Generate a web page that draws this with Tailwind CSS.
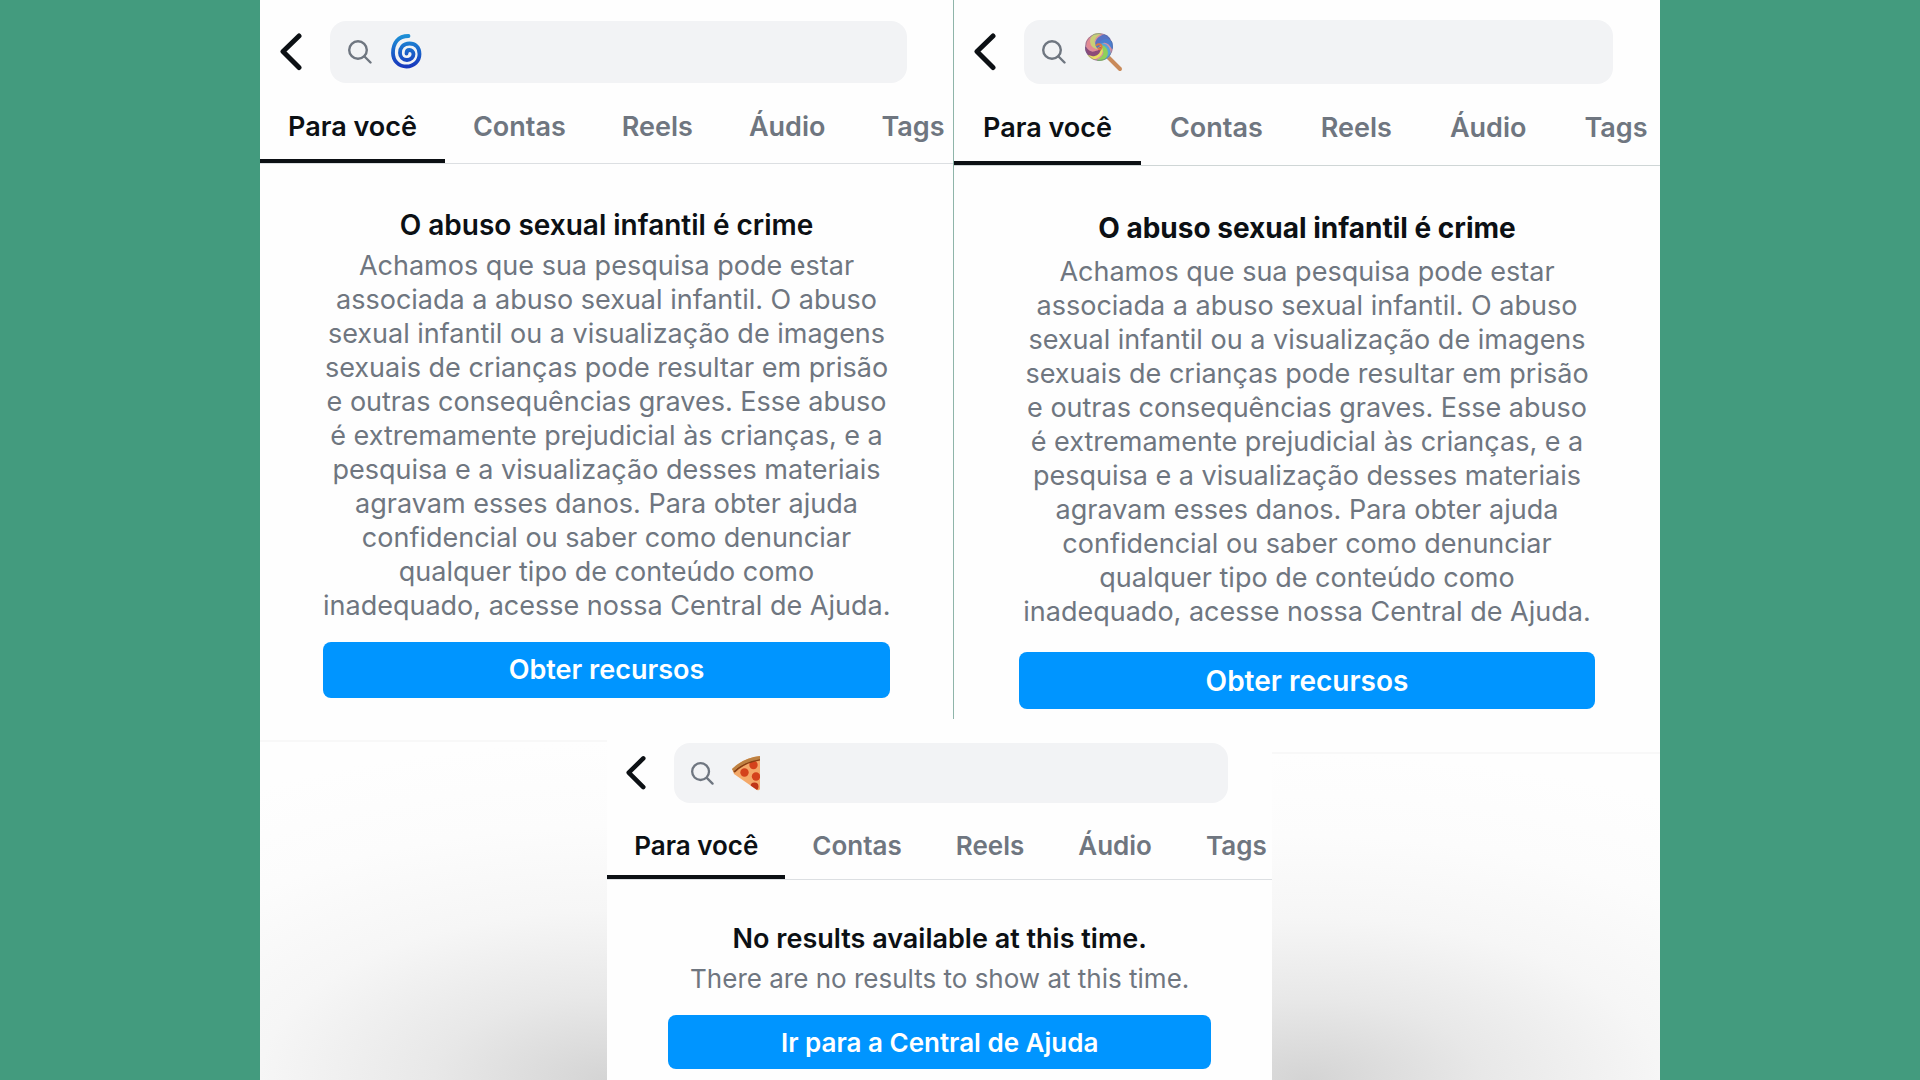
<!DOCTYPE html>
<html lang="pt-BR">
<head>
    <meta charset="UTF-8">
    <meta name="viewport" content="width=device-width, initial-scale=1.0">
    <title>Pesquisa</title>
    <script src="https://cdn.jsdelivr.net/npm/@tailwindcss/browser@4"></script>
</head>
<body class="min-h-screen bg-[#439b7e] font-['Inter',sans-serif] text-[#0c1014]">
    <div class="grid min-h-screen grid-cols-[13fr_70fr_13fr]">
        <main class="relative col-start-2 grid grid-cols-[693fr_707fr] overflow-hidden bg-[#fefefe]">

            <!-- Left panel -->
            <section class="flex min-w-0 flex-col">
                <div class="flex items-center gap-7 pt-[21px] pr-[46px] pl-5">
                    <button aria-label="Voltar" class="shrink-0">
                        <svg class="h-[38px] w-[22px]" viewBox="0 0 22 38" fill="none" stroke="currentColor" stroke-width="5" stroke-linecap="round" stroke-linejoin="round"><path d="M19 3L3 18.500L19 34.500"/></svg>
                    </button>
                    <label class="flex h-[62px] min-w-0 flex-1 items-center rounded-2xl bg-[#f2f3f5] pl-[18px]">
                        <svg class="size-6 shrink-0 text-[#6f7680]" viewBox="0 0 24 24" fill="none" stroke="currentColor" stroke-width="2.4" stroke-linecap="round"><circle cx="10" cy="10" r="8.800"/><path d="M16.500 16.500L22.500 22.500"/></svg>
                        <!-- Swirl -->
                        <svg class="ml-[18px] h-9 w-9 shrink-0" viewBox="0 0 36 36" fill="none">
                            <defs><linearGradient id="swirl" x1="0" y1="0" x2="0" y2="1"><stop offset="0" stop-color="#1d8fd6"/><stop offset="1" stop-color="#1838bd"/></linearGradient></defs>
                            <path d="M18.500 2C8 2 3 9 3 19C3 27 9 32.500 16.500 32.500C24 32.500 29.500 27 29.500 20C29.500 13 25 9.500 19.500 9.500C13 9.500 10 14 10 19C10 23 13 26 17 26C21 26 23.500 23 23.500 20C23.500 17.500 21.500 16 19.500 16C17.500 16 16.500 17.500 16.500 19.500" stroke="url(#swirl)" stroke-width="3.800" stroke-linecap="round"/>
                        </svg>
                        <input type="text" aria-label="Pesquisar" class="h-full min-w-0 flex-1 bg-transparent outline-none">
                    </label>
                </div>
                <nav class="mt-2 flex h-[73px] overflow-hidden border-b border-[#dcdfe2] text-[27px] font-semibold whitespace-nowrap text-[#6f7680]">
                    <a href="#" class="flex items-center border-b-4 border-[#0c1014] px-7 pt-1 text-[#0c1014]">Para você</a>
                    <a href="#" class="flex items-center px-7">Contas</a>
                    <a href="#" class="flex items-center px-7">Reels</a>
                    <a href="#" class="flex items-center px-7">Áudio</a>
                    <a href="#" class="flex items-center px-7">Tags</a>
                </nav>
                <div class="px-[63px] pt-11 text-center">
                    <h2 class="text-[28px] leading-[34px] font-semibold">O abuso sexual infantil é crime</h2>
                    <p class="mt-[7px] text-[27px] leading-[34px] whitespace-nowrap text-[#6f7680]">
                        Achamos que sua pesquisa pode estar<br>
                        associada a abuso sexual infantil. O abuso<br>
                        sexual infantil ou a visualização de imagens<br>
                        sexuais de crianças pode resultar em prisão<br>
                        e outras consequências graves. Esse abuso<br>
                        é extremamente prejudicial às crianças, e a<br>
                        pesquisa e a visualização desses materiais<br>
                        agravam esses danos. Para obter ajuda<br>
                        confidencial ou saber como denunciar<br>
                        qualquer tipo de conteúdo como<br>
                        inadequado, acesse nossa Central de Ajuda.
                    </p>
                    <button class="mt-[19px] h-14 w-full rounded-lg bg-[#0095ff] text-[27px] font-semibold text-white">Obter recursos</button>
                </div>
                <div class="mt-[42px] flex-1 border-t-2 border-[#f8f8f8] bg-[radial-gradient(ellipse_100%_100%_at_50%_100%,#d4d4d4_0%,#e8e8e8_25%,#f6f6f6_50%,#fcfcfc_75%,#fefefe_100%)]"></div>
            </section>

            <!-- Right panel -->
            <section class="flex min-w-0 flex-col border-l border-[#8fb5aa]">
                <div class="flex items-center gap-7 pt-5 pr-[47px] pl-5">
                    <button aria-label="Voltar" class="shrink-0">
                        <svg class="h-[38px] w-[22px]" viewBox="0 0 22 38" fill="none" stroke="currentColor" stroke-width="5" stroke-linecap="round" stroke-linejoin="round"><path d="M19 3L3 18.500L19 34.500"/></svg>
                    </button>
                    <label class="flex h-16 min-w-0 flex-1 items-center rounded-2xl bg-[#f2f3f5] pl-[18px]">
                        <svg class="size-6 shrink-0 text-[#6f7680]" viewBox="0 0 24 24" fill="none" stroke="currentColor" stroke-width="2.4" stroke-linecap="round"><circle cx="10" cy="10" r="8.800"/><path d="M16.500 16.500L22.500 22.500"/></svg>
                        <!-- Lollipop -->
                        <svg class="ml-[18px] h-10 w-10 shrink-0" viewBox="0 0 40 40" fill="none">
                            <defs><clipPath id="candy"><circle cx="15" cy="15" r="14"/></clipPath></defs>
                            <path d="M24 25L36 37" stroke="#c98a5a" stroke-width="4" stroke-linecap="round"/>
                            <g clip-path="url(#candy)" stroke-width="4.600">
                                <circle cx="15" cy="15" r="14" fill="#d98fa0"/>
                                <path d="M15 15C15 7 24 5 30 16" stroke="#4b7fd0"/>
                                <path d="M15 15C21 10 28 19 22 29" stroke="#58a5d8"/>
                                <path d="M15 15C23 15 25 24 14 30" stroke="#8fd05a"/>
                                <path d="M15 15C20 21 11 28 3 24" stroke="#e9dc63"/>
                                <path d="M15 15C15 23 6 25 0 16" stroke="#8d4a78"/>
                                <path d="M15 15C9 20 2 13 4 5" stroke="#e28a92"/>
                                <path d="M15 15C7 15 5 6 16 0" stroke="#c9cf77"/>
                                <path d="M15 15C10 9 19 2 27 6" stroke="#5873c4"/>
                                <path d="M12.500 14C13 11 18 12 17.500 15.500C17 18 14 17.500 14.500 15.500" stroke="#d97846" stroke-width="2"/>
                            </g>
                            <circle cx="15" cy="15" r="13.500" stroke="#54689a" stroke-opacity=".45"/>
                        </svg>
                        <input type="text" aria-label="Pesquisar" class="h-full min-w-0 flex-1 bg-transparent outline-none">
                    </label>
                </div>
                <nav class="mt-2 flex h-[74px] overflow-hidden border-b border-[#cfd6d6] text-[27px] font-semibold whitespace-nowrap text-[#6f7680]">
                    <a href="#" class="flex items-center border-b-4 border-[#0c1014] px-[29px] pt-1 text-[#0c1014]">Para você</a>
                    <a href="#" class="flex items-center px-[29px]">Contas</a>
                    <a href="#" class="flex items-center px-[29px]">Reels</a>
                    <a href="#" class="flex items-center px-[29px]">Áudio</a>
                    <a href="#" class="flex items-center px-[29px]">Tags</a>
                </nav>
                <div class="px-[65px] pt-[45px] text-center">
                    <h2 class="text-[28px] leading-[34px] font-bold">O abuso sexual infantil é crime</h2>
                    <p class="mt-[10px] text-[27px] leading-[34px] whitespace-nowrap text-[#6f7680]">
                        Achamos que sua pesquisa pode estar<br>
                        associada a abuso sexual infantil. O abuso<br>
                        sexual infantil ou a visualização de imagens<br>
                        sexuais de crianças pode resultar em prisão<br>
                        e outras consequências graves. Esse abuso<br>
                        é extremamente prejudicial às crianças, e a<br>
                        pesquisa e a visualização desses materiais<br>
                        agravam esses danos. Para obter ajuda<br>
                        confidencial ou saber como denunciar<br>
                        qualquer tipo de conteúdo como<br>
                        inadequado, acesse nossa Central de Ajuda.
                    </p>
                    <button class="mt-[23px] h-[57px] w-full rounded-lg bg-[#0095ff] text-[28px] font-semibold text-white">Obter recursos</button>
                </div>
                <div class="mt-[43px] flex-1 border-t-2 border-[#f8f8f8] bg-[radial-gradient(ellipse_100%_100%_at_50%_100%,#d4d4d4_0%,#e8e8e8_25%,#f6f6f6_50%,#fcfcfc_75%,#fefefe_100%)]"></div>
            </section>

            <!-- Bottom panel, laid over the other two -->
            <section class="absolute bottom-0 left-[24.8%] flex h-[361px] w-[47.5%] flex-col bg-[#fefefe]">
                <div class="flex items-center gap-7 pt-6 pr-11 pl-[19px]">
                    <button aria-label="Voltar" class="shrink-0">
                        <svg class="h-9 w-5" viewBox="0 0 22 38" fill="none" stroke="currentColor" stroke-width="5" stroke-linecap="round" stroke-linejoin="round"><path d="M19 3L3 18.500L19 34.500"/></svg>
                    </button>
                    <label class="flex h-[60px] min-w-0 flex-1 items-center rounded-2xl bg-[#f2f3f5] pl-[17px]">
                        <svg class="size-[23px] shrink-0 text-[#6f7680]" viewBox="0 0 24 24" fill="none" stroke="currentColor" stroke-width="2.4" stroke-linecap="round"><circle cx="10" cy="10" r="8.800"/><path d="M16.500 16.500L22.500 22.500"/></svg>
                        <!-- Pizza slice -->
                        <svg class="ml-[17px] h-9 w-[30px] shrink-0" viewBox="0 0 30 36" fill="none">
                            <defs><clipPath id="slice"><path d="M1 14Q12 3 29 1V34Q28 36 26 35L3 19Z"/></clipPath></defs>
                            <g clip-path="url(#slice)">
                                <path d="M0 0H30V36H0Z" fill="#f4a868"/>
                                <circle cx="22.500" cy="10" r="4.200" fill="#d4421c"/>
                                <circle cx="13.500" cy="17.500" r="4.200" fill="#d4421c"/>
                                <circle cx="25" cy="21.500" r="4.200" fill="#d4421c"/>
                                <circle cx="23.500" cy="31.500" r="4" fill="#bf3517"/>
                                <path d="M3 17Q13 7 29 4.500" stroke="#8a3f14" stroke-width="2"/>
                                <path d="M1 14.500Q12 4.500 29 2" stroke="#bd8142" stroke-width="4.500"/>
                            </g>
                        </svg>
                        <input type="text" aria-label="Pesquisar" class="h-full min-w-0 flex-1 bg-transparent outline-none">
                    </label>
                </div>
                <nav class="mt-2 flex h-[69px] overflow-hidden border-b border-[#dcdfe2] text-[26px] font-semibold whitespace-nowrap text-[#6f7680]">
                    <a href="#" class="flex items-center border-b-4 border-[#0c1014] px-[27px] pt-1 text-[#0c1014]">Para você</a>
                    <a href="#" class="flex items-center px-[27px]">Contas</a>
                    <a href="#" class="flex items-center px-[27px]">Reels</a>
                    <a href="#" class="flex items-center px-[27px]">Áudio</a>
                    <a href="#" class="flex items-center px-[27px]">Tags</a>
                </nav>
                <div class="px-[61px] pt-[42px] text-center">
                    <h2 class="text-[27px] leading-[34px] font-semibold">No results available at this time.</h2>
                    <p class="mt-[6px] text-[26px] leading-[34px] whitespace-nowrap text-[#6f7680]">There are no results to show at this time.</p>
                    <button class="mt-[19px] h-[54px] w-full rounded-lg bg-[#0095ff] text-[26px] font-semibold text-white">Ir para a Central de Ajuda</button>
                </div>
            </section>
        </main>
    </div>
</body>
</html>
